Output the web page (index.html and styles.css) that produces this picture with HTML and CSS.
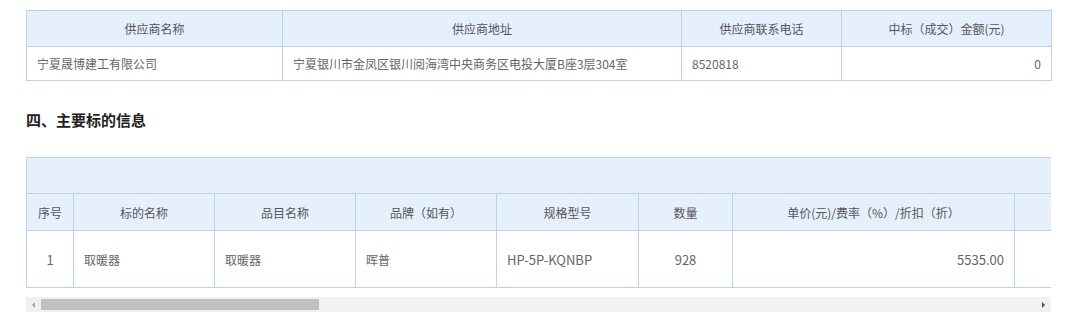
FILE: index.html
```html
<!DOCTYPE html>
<html lang="zh-CN">
<head>
<meta charset="utf-8">
<title>供应商信息</title>
<link rel="stylesheet" href="styles.css">
</head>
<body>
<div class="page">
  <table class="grid supplier">
    <colgroup>
      <col style="width:256px"><col style="width:399px"><col style="width:160px"><col style="width:210px">
    </colgroup>
    <thead>
      <tr><th>供应商名称</th><th>供应商地址</th><th>供应商联系电话</th><th>中标（成交）金额(元)</th></tr>
    </thead>
    <tbody>
      <tr><td>宁夏晟博建工有限公司</td><td>宁夏银川市金凤区银川阅海湾中央商务区电投大厦B座3层304室</td><td>8520818</td><td class="num">0</td></tr>
    </tbody>
  </table>

  <h2 class="section-title">四、主要标的信息</h2>

  <div class="scroll-panel">
    <div class="scroller">
      <table class="grid items">
        <colgroup>
          <col style="width:47px"><col style="width:141px"><col style="width:141px"><col style="width:141px"><col style="width:142px"><col style="width:94px"><col style="width:282px"><col style="width:2672px">
        </colgroup>
        <thead>
          <tr class="group"><th colspan="8"></th></tr>
          <tr class="cols"><th>序号</th><th>标的名称</th><th>品目名称</th><th>品牌（如有）</th><th>规格型号</th><th>数量</th><th>单价(元)/费率（%）/折扣（折）</th><th></th></tr>
        </thead>
        <tbody>
          <tr class="tall"><td class="center idx">1</td><td>取暖器</td><td>取暖器</td><td>晖普</td><td class="latin">HP-5P-KQNBP</td><td class="center">928</td><td class="num">5535.00</td><td></td></tr>
        </tbody>
      </table>
    </div>
    <div class="hscroll">
      <span class="arrow arrow-left"></span>
      <div class="track"><div class="thumb" style="width:278px"></div></div>
      <span class="arrow arrow-right"></span>
    </div>
  </div>
</div>
</body>
</html>
```

FILE: styles.css
```css
html, body {
  margin: 0;
  padding: 0;
  background: #ffffff;
}

body {
  font-family: "Noto Sans CJK SC", "Noto Sans", sans-serif;
  font-size: 12px;
  color: #666666;
}

.page {
  width: 1025px;
  padding: 10px 0 0 26px;
}

.grid {
  border-collapse: collapse;
  table-layout: fixed;
}

.grid th,
.grid td {
  border: 1px solid #bcd2e8;
  padding: 0 10px;
  white-space: nowrap;
  overflow: hidden;
}

.grid th {
  background: #e6f0fd;
  color: #555555;
  font-weight: normal;
  text-align: center;
}

.grid td {
  text-align: left;
}

.grid td.num {
  text-align: right;
}

.grid td.center {
  text-align: center;
}

.supplier {
  width: 1025px;
}

.supplier thead tr {
  height: 36px;
}

.supplier tbody tr {
  height: 34px;
}

.section-title {
  margin: 30px 0 28px 0;
  font-size: 15px;
  line-height: 18px;
  font-weight: bold;
  color: #222222;
}

.scroll-panel {
  width: 1025px;
}

.scroller {
  width: 1025px;
  overflow: hidden;
}

.items {
  width: 3660px;
}

.items tr.group {
  height: 36px;
}

.items tr.cols {
  height: 37px;
}

.items tr.tall {
  height: 57px;
}

.items td.idx {
  font-size: 14px;
}

.items td.latin,
.items td.num,
.items td.center {
  font-size: 13px;
}

.hscroll {
  display: flex;
  align-items: stretch;
  height: 15px;
  margin-top: 9px;
  background: #f1f1f1;
}

.arrow {
  width: 15px;
  display: flex;
  align-items: center;
  justify-content: center;
}

.arrow::before {
  content: "";
  width: 0;
  height: 0;
  border-top: 3px solid transparent;
  border-bottom: 3px solid transparent;
}

.arrow-left::before {
  border-right: 3px solid #a3a3a3;
}

.arrow-right::before {
  border-left: 3px solid #505050;
}

.track {
  flex: 1;
  display: flex;
  align-items: stretch;
  padding: 2px 0;
}

.thumb {
  background: #c1c1c1;
}
```
